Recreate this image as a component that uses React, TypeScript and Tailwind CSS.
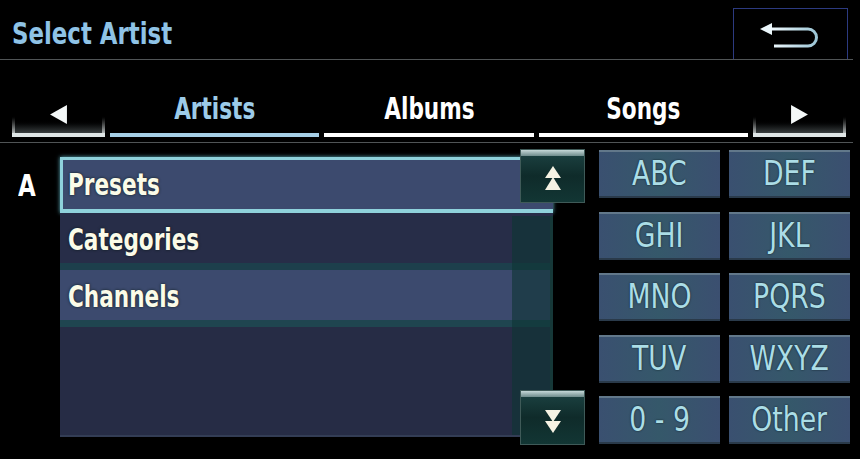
import React from 'react';

const keys = ['ABC', 'DEF', 'GHI', 'JKL', 'MNO', 'PQRS', 'TUV', 'WXYZ', '0 - 9', 'Other'];

const BackIcon = () => (
  <svg width="62" height="30" viewBox="0 0 62 30">
    <defs>
      <linearGradient id="bk" x1="0" y1="0" x2="1" y2="0">
        <stop offset="0" stopColor="#f2fbff" />
        <stop offset="1" stopColor="#9cc6d6" />
      </linearGradient>
    </defs>
    <polygon points="0,8 12,2 12,14" fill="#eaf6fa" />
    <path d="M10 8 H48 A8.5 8.5 0 0 1 48 25 H14" fill="none" stroke="url(#bk)" strokeWidth="3" />
  </svg>
);

const NavButton = ({ dir }: { dir: 'left' | 'right' }) => (
  <div className="relative w-[93px] h-[57px] bg-black">
    <div className="absolute left-0 right-0 bottom-[4px] h-[14px] bg-gradient-to-t from-[#3a3f40] to-black" />
    <div className="absolute left-0 bottom-0 w-[3px] h-[22px] bg-gradient-to-t from-[#e8eeee] to-black" />
    <div className="absolute right-0 bottom-0 w-[3px] h-[22px] bg-gradient-to-t from-[#e8eeee] to-black" />
    <div className="absolute left-0 right-0 bottom-0 h-[4px] bg-[#dfe6e6]" />
    <div className="absolute inset-0 flex items-center justify-center pt-[12px]">
      <svg width="17" height="19" viewBox="0 0 16 18">
        {dir === 'left' ? (
          <polygon points="0,9 16,0 16,18" fill="#f4f8f8" />
        ) : (
          <polygon points="16,9 0,0 0,18" fill="#f4f8f8" />
        )}
      </svg>
    </div>
  </div>
);

const ScrollButton = ({ dir, className }: { dir: 'up' | 'down'; className: string }) => (
  <div
    className={`absolute w-[65px] border border-[#3f5a58] bg-gradient-to-b from-[#1d4444] via-[#0f2b2a] to-[#123634] flex items-center justify-center ${className}`}
  >
    <div className="absolute left-0 right-0 top-0 h-[6px] bg-gradient-to-b from-[#c6d8d8] to-[#6f8c8c]" />
    <svg width="16" height="26" viewBox="0 0 16 26" className="mt-[6px]">
      {dir === 'up' ? (
        <>
          <polygon points="8,0 16,12 0,12" fill="#f6f3e4" />
          <polygon points="8,11 16,24 0,24" fill="#f6f3e4" />
        </>
      ) : (
        <>
          <polygon points="0,2 16,2 8,14" fill="#f6f3e4" />
          <polygon points="0,13 16,13 8,25" fill="#f6f3e4" />
        </>
      )}
    </svg>
  </div>
);

const Tab = ({ label, active }: { label: string; active?: boolean }) => (
  <div className="flex-1 flex flex-col items-center">
    <span
      className={`inline-block scale-x-[0.8] text-[30px] leading-[34px] font-bold mb-[7px] ${active ? 'text-[#9ccbe8]' : 'text-white'}`}
    >
      {label}
    </span>
    <div className={`w-full h-[4px] ${active ? 'bg-[#a6cfe6]' : 'bg-white'}`} />
  </div>
);

const Row = ({ label }: { label: string }) => (
  <span className="inline-block origin-left scale-x-[0.8] text-[30px] leading-[34px] font-bold text-[#fbfbe8] [text-shadow:0_0_3px_#0b1a1a]">
    {label}
  </span>
);

export default function App() {
  return (
    <div className="w-[860px] h-[459px] bg-black overflow-hidden font-['Liberation_Sans_Narrow','DejaVu_Sans_Condensed',sans-serif]">
      {/* Header */}
      <div className="flex items-start h-[60px] w-[853px] border-b border-[#505456]">
        <h1 className="pl-[12px] pt-[15px] text-[31px] leading-[36px] font-bold text-[#8fc3e6]">
          <span className="inline-block origin-left scale-x-[0.82]">Select Artist</span>
        </h1>
        <div className="ml-auto mt-[8px] mr-[5px] w-[115px] h-[51px] border border-[#2c3a80] border-b-0 flex items-center justify-center pt-[4px]">
          <BackIcon />
        </div>
      </div>

      {/* Tabs */}
      <div className="flex items-end gap-[5px] h-[83px] w-[853px] pl-[12px] pr-[7px] pb-[5px] border-b border-[#505456]">
        <NavButton dir="left" />
        <Tab label="Artists" active />
        <Tab label="Albums" />
        <Tab label="Songs" />
        <NavButton dir="right" />
      </div>

      {/* Content */}
      <div className="flex">
        <div className="w-[60px] pt-[26px] pl-[18px] text-[30px] leading-[34px] font-bold text-white">
          <span className="inline-block origin-left scale-x-[0.85]">A</span>
        </div>

        <div className="relative mt-[14px] w-[493px] h-[280px] bg-[#262c45] border-b-2 border-[#333d55]">
          <div className="h-[56px] bg-[#3c4a6e] border-t-[3px] border-b-[4px] border-l-[3px] border-[#8fd2dc] shadow-[0_0_4px_#5fb0c0] flex items-center pl-[5px]">
            <Row label="Presets" />
          </div>
          <div className="h-[57px] bg-[#272d48] border-b-[7px] border-[#1d3f4c] flex items-center pl-[8px] pt-[4px]">
            <Row label="Categories" />
          </div>
          <div className="h-[57px] bg-[#3c4a6e] border-b-[7px] border-[#1f4550] flex items-center pl-[8px] pt-[4px]">
            <Row label="Channels" />
          </div>
          <div className="absolute top-[59px] bottom-0 right-0 w-[41px] bg-[#0d3534]/60 border-r-[3px] border-[#163838]" />
          <ScrollButton dir="up" className="top-[-8px] left-[460px] h-[54px]" />
          <ScrollButton dir="down" className="top-[233px] left-[460px] h-[55px]" />
        </div>

        <div className="ml-[46px] mt-[7px] grid grid-cols-[121px_121px] gap-x-[9px] gap-y-[13.5px]">
          {keys.map((k) => (
            <div
              key={k}
              className="h-[48px] bg-gradient-to-r from-[#3a5070] via-[#35586a] to-[#3b4f70] border-t-2 border-[#62788a] border-b-2 border-b-[#2a3a4a] flex items-center justify-center"
            >
              <span className="inline-block scale-x-[0.9] text-[33px] leading-[36px] text-[#abdde6] [text-shadow:0_0_2px_#0a1a20]">
                {k}
              </span>
            </div>
          ))}
        </div>
      </div>
    </div>
  );
}
